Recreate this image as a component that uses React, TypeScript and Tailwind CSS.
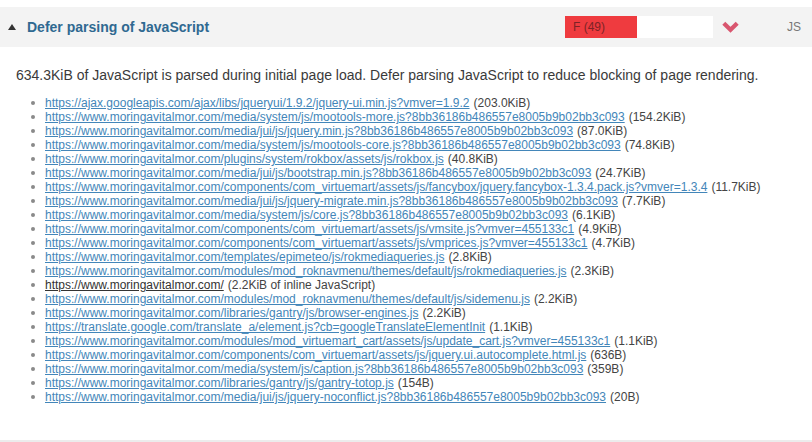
const site = "https://www.moringavitalmor.com"
const hash = "8bb36186b486557e8005b9b02bb3c093"

const scripts = [
  { url: "https://ajax.googleapis.com/ajax/libs/jqueryui/1.9.2/jquery-ui.min.js?vmver=1.9.2", size: "203.0KiB" },
  { url: `${site}/media/system/js/mootools-more.js?${hash}`, size: "154.2KiB" },
  { url: `${site}/media/jui/js/jquery.min.js?${hash}`, size: "87.0KiB" },
  { url: `${site}/media/system/js/mootools-core.js?${hash}`, size: "74.8KiB" },
  { url: `${site}/plugins/system/rokbox/assets/js/rokbox.js`, size: "40.8KiB" },
  { url: `${site}/media/jui/js/bootstrap.min.js?${hash}`, size: "24.7KiB" },
  { url: `${site}/components/com_virtuemart/assets/js/fancybox/jquery.fancybox-1.3.4.pack.js?vmver=1.3.4`, size: "11.7KiB" },
  { url: `${site}/media/jui/js/jquery-migrate.min.js?${hash}`, size: "7.7KiB" },
  { url: `${site}/media/system/js/core.js?${hash}`, size: "6.1KiB" },
  { url: `${site}/components/com_virtuemart/assets/js/vmsite.js?vmver=455133c1`, size: "4.9KiB" },
  { url: `${site}/components/com_virtuemart/assets/js/vmprices.js?vmver=455133c1`, size: "4.7KiB" },
  { url: `${site}/templates/epimeteo/js/rokmediaqueries.js`, size: "2.8KiB" },
  { url: `${site}/modules/mod_roknavmenu/themes/default/js/rokmediaqueries.js`, size: "2.3KiB" },
  { url: `${site}/`, size: "2.2KiB of inline JavaScript", inline: true },
  { url: `${site}/modules/mod_roknavmenu/themes/default/js/sidemenu.js`, size: "2.2KiB" },
  { url: `${site}/libraries/gantry/js/browser-engines.js`, size: "2.2KiB" },
  { url: "https://translate.google.com/translate_a/element.js?cb=googleTranslateElementInit", size: "1.1KiB" },
  { url: `${site}/modules/mod_virtuemart_cart/assets/js/update_cart.js?vmver=455133c1`, size: "1.1KiB" },
  { url: `${site}/components/com_virtuemart/assets/js/jquery.ui.autocomplete.html.js`, size: "636B" },
  { url: `${site}/media/system/js/caption.js?${hash}`, size: "359B" },
  { url: `${site}/libraries/gantry/js/gantry-totop.js`, size: "154B" },
  { url: `${site}/media/jui/js/jquery-noconflict.js?${hash}`, size: "20B" },
]

const App = () => {
  return (
    <div className="w-[812px] h-[442px] bg-white overflow-hidden font-['Liberation_Sans',Arial,sans-serif] flex flex-col">
      <div className="h-[7px]" />
      <div className="h-[40px] bg-[#f3f3f3] flex items-center">
        <svg width="8" height="6" viewBox="0 0 8 6" className="ml-[8px]">
          <polygon points="4,0 8,6 0,6" fill="#333" />
        </svg>
        <span className="ml-[11px] text-[14px] font-bold text-[#2f6991]">Defer parsing of JavaScript</span>
        <div className="ml-auto flex items-center">
          <div className="w-[148px] h-[22px] bg-white flex">
            <div className="w-[72px] h-full bg-[#ef3b3f] flex items-center pl-[8px] text-[12px] text-[#7d2326]">F (49)</div>
          </div>
          <svg width="17" height="12" viewBox="0 0 17 12" className="ml-[9px]">
            <path d="M1.8 2.2 L8.5 8.8 L15.2 2.2" fill="none" stroke="#d9566f" strokeWidth="4.2" strokeLinejoin="miter" />
          </svg>
          <span className="ml-[48px] mr-[11px] text-[12px] text-[#777]">JS</span>
        </div>
      </div>
      <p className="mt-[20px] ml-[16px] text-[14px] text-[#3a3a3a] leading-[16px]">
        634.3KiB of JavaScript is parsed during initial page load. Defer parsing JavaScript to reduce blocking of page rendering.
      </p>
      <ul className="mt-[13px] ml-[31px] text-[12px] leading-[14px] text-[#444]">
        {scripts.map((s) => (
          <li key={s.url + s.size} className="flex items-center whitespace-nowrap">
            <span className="w-[4px] h-[4px] rounded-full bg-[#8a8a8a]" />
            <a href="#" className={`ml-[10px] underline ${s.inline ? "text-[#333]" : "text-[#4386b9]"}`}>
              {s.url}
            </a>
            <span className="ml-[4px]">({s.size})</span>
          </li>
        ))}
      </ul>
      <div className="mt-auto h-[2px] bg-[#ececec]" />
    </div>
  )
}

export default App
